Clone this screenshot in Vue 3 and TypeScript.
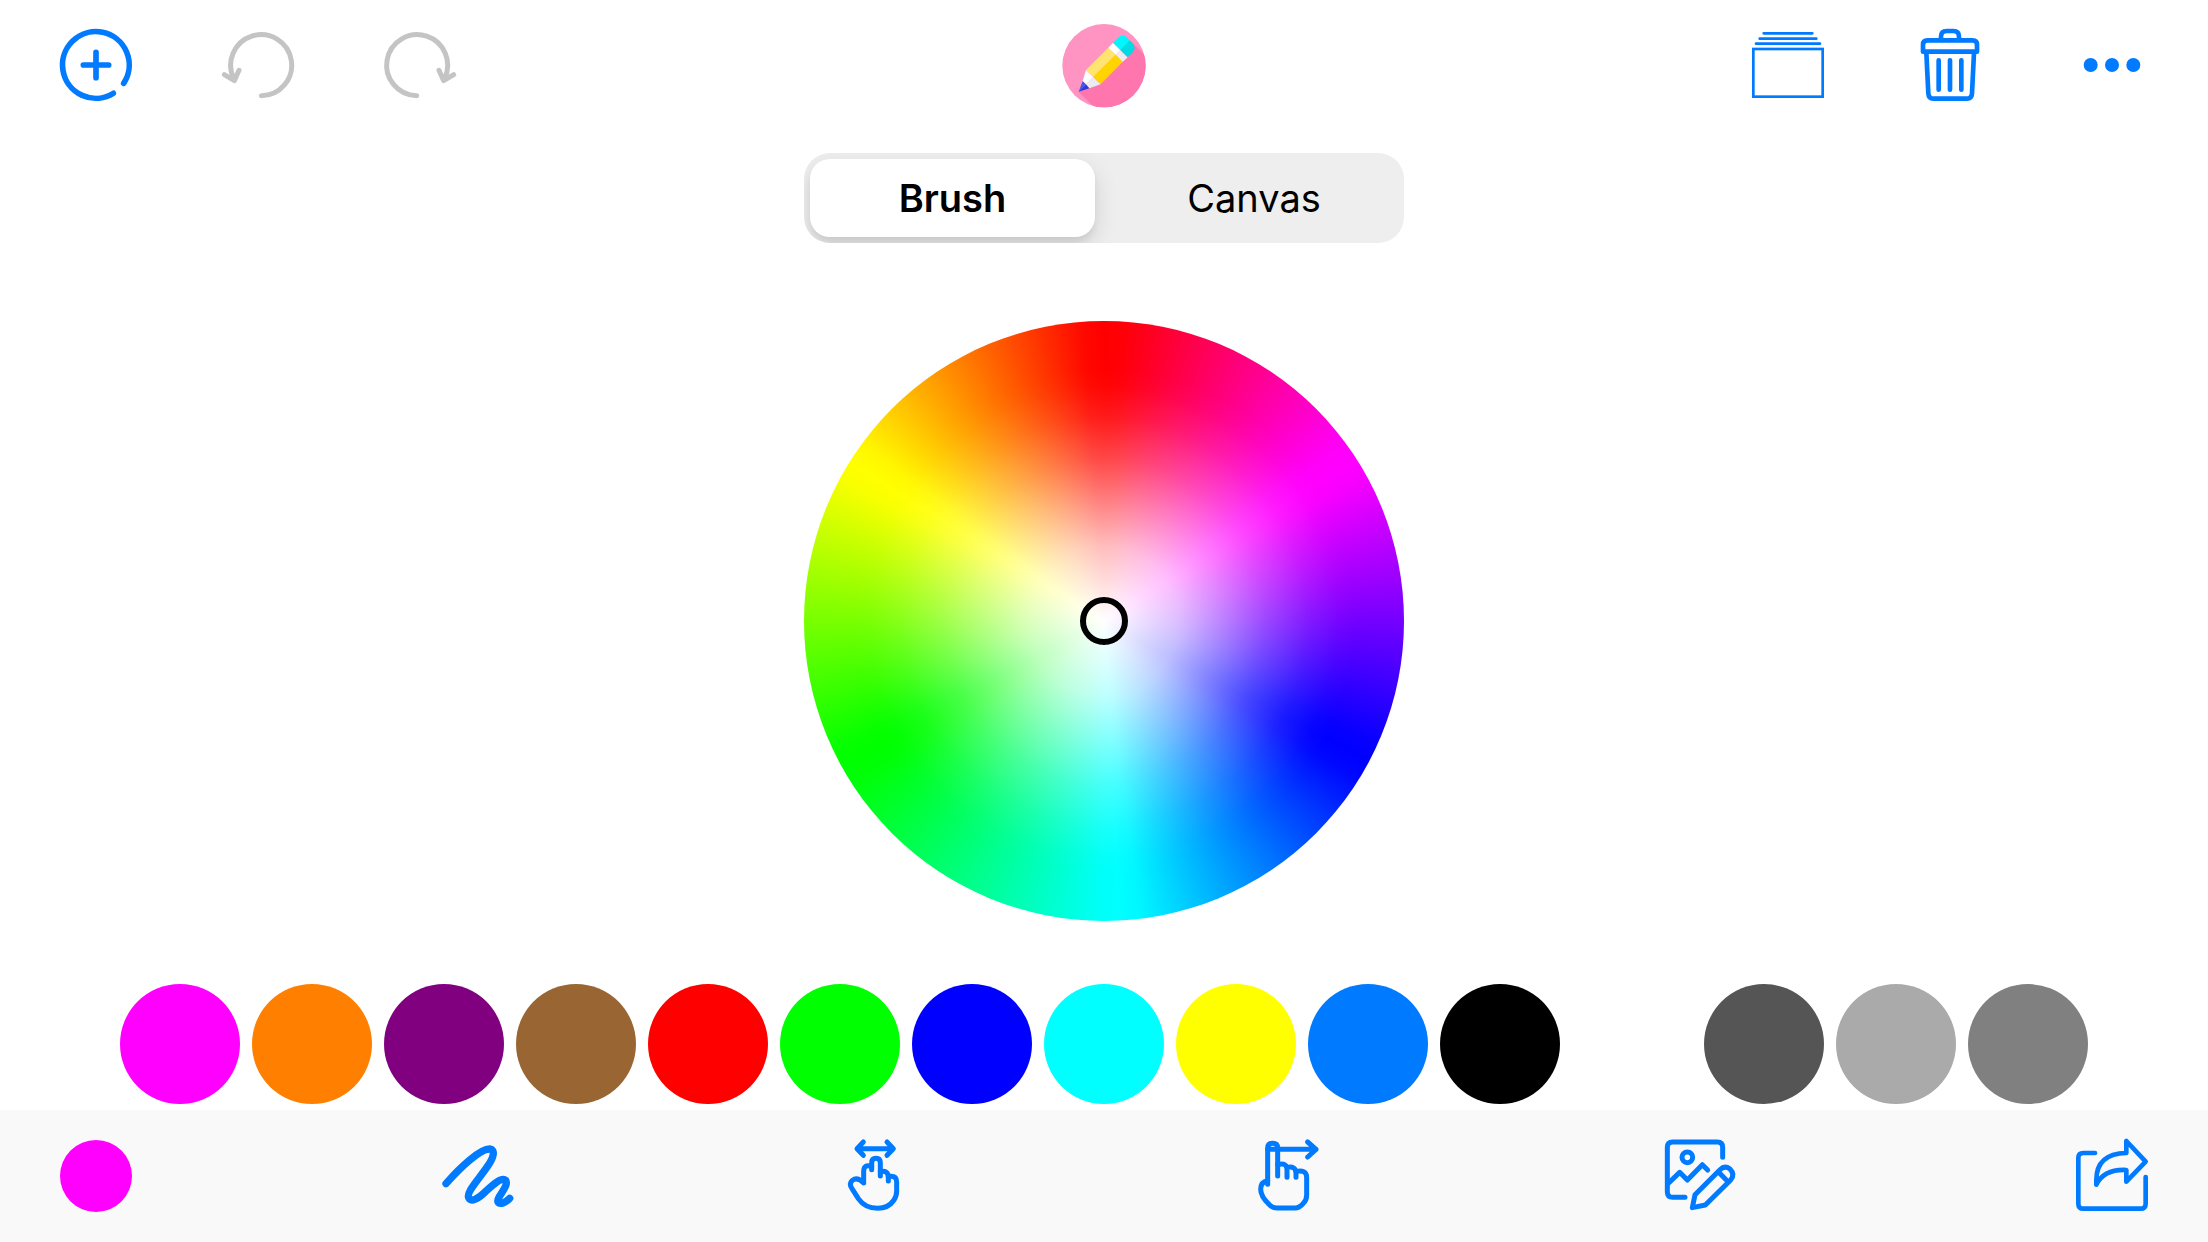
<script setup lang="ts">
import { ref } from 'vue'

type Target = 'Brush' | 'Canvas'

interface Swatch {
  name: string
  value: string
}

const targets: Target[] = ['Brush', 'Canvas']
const target = ref<Target>('Brush')
const brushColor = ref('#ff00ff')

const swatches: Swatch[] = [
  { name: 'Magenta', value: '#ff00ff' },
  { name: 'Orange', value: '#ff8000' },
  { name: 'Purple', value: '#800080' },
  { name: 'Brown', value: '#996633' },
  { name: 'Red', value: '#ff0000' },
  { name: 'Green', value: '#00ff00' },
  { name: 'Blue', value: '#0000ff' },
  { name: 'Cyan', value: '#00ffff' },
  { name: 'Yellow', value: '#ffff00' },
  { name: 'Azure', value: '#007aff' },
  { name: 'Black', value: '#000000' },
  { name: 'White', value: '#ffffff' },
  { name: 'Dark gray', value: '#555555' },
  { name: 'Light gray', value: '#aaaaaa' },
  { name: 'Gray', value: '#808080' },
]
</script>

<template>
  <div class="app">
    <header class="topbar">
      <div class="group">
        <button class="tool" type="button" aria-label="New drawing">
          <svg viewBox="60 57 216 216" stroke-width="17">
            <path d="M251 220A100 100 0 1 0 220 250M168 127V203M130 165H206" />
          </svg>
        </button>
        <button class="tool muted" type="button" aria-label="Undo">
          <svg viewBox="546 57 216 216" stroke-width="15">
            <path d="M664 257A91.500 91.500 0 1 0 582 207M553 194L583 212L597 181" />
          </svg>
        </button>
        <button class="tool muted" type="button" aria-label="Redo">
          <svg viewBox="1032 57 216 216" stroke-width="15">
            <path d="M1130 257A91.500 91.500 0 1 1 1213 207M1241 194L1211 212L1197 181" />
          </svg>
        </button>
      </div>

      <button class="tool logo" type="button" aria-label="Drawing tool">
        <svg viewBox="66 40 252 252" stroke="none">
          <clipPath id="disc"><circle cx="192" cy="168" r="125" /></clipPath>
          <g clip-path="url(#disc)">
            <rect x="60" y="36" width="264" height="264" fill="#ff93c1" />
            <path d="M116 246L168 298H330V152L277 99Z" fill="#ff75ad" />
          </g>
          <path d="M128 214L138 181L160 202L132 230Z" fill="#fff" />
          <path d="M160 202L182 224L148 236L132 230Z" fill="#ececf0" />
          <path d="M116 246L128 214L138 224Z" fill="#4557e4" />
          <path d="M116 246L138 224L148 236Z" fill="#2b3bd0" />
          <path d="M138 181L205 114L227 135L160 202Z" fill="#ffe570" />
          <path d="M160 202L227 135L248 157L182 224Z" fill="#ffd400" />
          <path d="M205 114L219 99L241 121L227 135Z" fill="#fff" />
          <path d="M227 135L241 121L263 143L248 157Z" fill="#ececf0" />
          <path d="M219 99L232 86Q246 71 261 83L269 92L241 121Z" fill="#00f7ff" />
          <path d="M241 121L269 92L277 99Q291 114 277 129L263 143Z" fill="#00dbe3" />
        </svg>
      </button>

      <div class="group end">
        <button class="tool" type="button" aria-label="Layers">
          <svg viewBox="66 57 216 216" stroke-width="8">
            <path d="M101 70H247M89 86H259M78 101H270" />
            <rect x="70" y="117" width="208" height="143" stroke-linejoin="miter" />
          </svg>
        </button>
        <button class="tool" type="button" aria-label="Delete">
          <svg viewBox="552 57 216 216" stroke-width="14">
            <path d="M579 125V104Q579 91 592 91H728Q741 91 741 104V125Z" />
            <path d="M633 88V80Q633 63 650 63H670Q687 63 687 80V88" />
            <path d="M589 128L595 250Q596 266 610 266H711Q725 266 726 250L732 128" />
            <path d="M626 151V239M660 151V239M694 151V239" />
          </svg>
        </button>
        <button class="tool" type="button" aria-label="More">
          <svg viewBox="1038 57 216 216" stroke="none" class="solid">
            <circle cx="1082" cy="165" r="21" />
            <circle cx="1146" cy="165" r="21" />
            <circle cx="1210" cy="165" r="21" />
          </svg>
        </button>
      </div>
    </header>

    <main class="picker">
      <div class="segments" role="group" aria-label="Color target">
        <button
          v-for="item in targets"
          :key="item"
          type="button"
          class="segment"
          :class="{ active: item === target }"
          :aria-pressed="item === target"
          @click="target = item"
        >
          {{ item }}
        </button>
      </div>

      <div class="wheel">
        <button class="handle" type="button" aria-label="Selected color"></button>
      </div>
    </main>

    <div class="swatches">
      <button
        v-for="swatch in swatches"
        :key="swatch.name"
        type="button"
        class="swatch"
        :aria-label="swatch.name"
        :style="{ backgroundColor: swatch.value }"
        @click="brushColor = swatch.value"
      ></button>
    </div>

    <footer class="bottombar">
      <button
        class="tool current"
        type="button"
        aria-label="Brush color"
        :style="{ backgroundColor: brushColor }"
      ></button>
      <button class="tool" type="button" aria-label="Stroke">
        <svg viewBox="36 60 216 216" stroke-width="22">
          <path d="M48 191C92 140 152 86 179 87C197 89 191 112 174 137C148 176 108 216 116 233C123 247 143 237 162 219C190 193 215 171 227 181C235 193 217 214 208 230C198 247 206 253 219 249C228 246 233 241 239 235" />
        </svg>
      </button>
      <button class="tool" type="button" aria-label="Pan and zoom">
        <svg viewBox="51 60 216 216" stroke-width="15">
          <path d="M112 86H219M130 66L111 86L130 106M201 66L220 86L201 106" />
          <path d="M155 149V129Q155 115 168 115Q181 115 181 129V168" />
          <path d="M155 140Q131 131 131 155V189Q112 169 97 181Q86 191 96 206L115 236Q135 265 173 265Q205 265 222 240Q230 228 230 212V186Q230 169 213 169H205" />
          <path d="M181 155Q205 150 205 173V183" />
        </svg>
      </button>
      <button class="tool" type="button" aria-label="Straight line">
        <svg viewBox="36 60 216 216" stroke-width="15">
          <path d="M83 88H228M203 66L228 88L203 111" />
          <path d="M83 193V84Q83 70 98 70Q113 70 113 84V168" />
          <path d="M113 134Q141 126 141 150V172M141 142Q168 137 168 160V172" />
          <path d="M168 154Q200 148 200 172V225Q200 240 190 250Q178 264 165 264H110Q98 264 88 254Q62 230 62 208Q62 185 83 182" />
        </svg>
      </button>
      <button class="tool" type="button" aria-label="Edit picture">
        <svg viewBox="69 60 216 216" stroke-width="15">
          <path d="M248 112V82Q248 66 232 66H98Q82 66 82 82V216Q82 232 98 232H135" />
          <circle cx="142" cy="112" r="16" />
          <path d="M86 189L119 157L142 180L187 134L203 150" />
          <path d="M157 263L165 224L240 149Q254 135 270 147Q286 163 272 180L196 255ZM236 157L262 183" />
        </svg>
      </button>
      <button class="tool" type="button" aria-label="Share">
        <svg viewBox="78 60 216 216" stroke-width="14">
          <path d="M135 99H100Q85 99 85 114V251Q85 266 100 266H272Q287 266 287 251V171" />
          <path d="M229 63V99Q139 101 139 180V194Q162 147 229 150V185L287 125Z" />
        </svg>
      </button>
    </footer>
  </div>
</template>

<style>
body {
  margin: 0;
  background: #fff;
}
</style>

<style scoped>
.app {
  display: flex;
  flex-direction: column;
  min-height: 100vh;
  background: #fff;
  font-family: Inter, "Liberation Sans", sans-serif;
}

button {
  margin: 0;
  padding: 0;
  border: 0;
  background: none;
  font: inherit;
  cursor: pointer;
}

.topbar {
  display: grid;
  grid-template-columns: 1fr auto 1fr;
  align-items: center;
  height: 130px;
  padding: 0 60px;
}

.group {
  display: flex;
  gap: 90px;
}

.end {
  justify-content: flex-end;
}

.tool {
  width: 72px;
  height: 72px;
  color: #007aff;
}

.tool svg {
  display: block;
  width: 100%;
  height: 100%;
  overflow: visible;
  fill: none;
  stroke-linecap: round;
  stroke-linejoin: round;
}

.tool svg:not([stroke]) {
  stroke: currentColor;
}

.tool .solid {
  fill: currentColor;
}

.muted {
  color: #c4c4c4;
}

.logo {
  width: 84px;
  height: 84px;
}

.picker {
  display: flex;
  flex-direction: column;
  align-items: center;
  gap: 78px;
  padding: 23px 60px 63px;
}

.segments {
  display: grid;
  grid-template-columns: 1fr 1fr;
  width: 600px;
  height: 90px;
  border-radius: 26px;
  background: #eee;
  overflow: hidden;
}

.segment {
  margin: 6px 9px 6px 6px;
  border-radius: 20px;
  color: #000;
  font-size: 38px;
  line-height: 46px;
}

.segment:last-child {
  margin: 6px;
}

.segment.active {
  background: #fff;
  box-shadow: 0 9px 24px rgba(0, 0, 0, 0.12), 0 6px 6px rgba(0, 0, 0, 0.06);
  font-weight: 600;
}

.wheel {
  display: grid;
  place-items: center;
  width: 600px;
  height: 600px;
  border-radius: 50%;
  background:
    radial-gradient(
      closest-side,
      rgba(255, 255, 255, 1) 0%,
      rgba(255, 255, 255, 0.74) 25%,
      rgba(255, 255, 255, 0.5) 40%,
      rgba(255, 255, 255, 0.28) 54%,
      rgba(255, 255, 255, 0.1) 68%,
      rgba(255, 255, 255, 0.02) 78%,
      rgba(255, 255, 255, 0) 84%
    ),
    conic-gradient(
      #f00 0deg,
      #ff0008 4deg,
      #ff00f7 53deg,
      #f0f 57deg,
      #f700ff 61deg,
      #0800ff 114deg,
      #00f 118deg,
      #0008ff 122deg,
      #00f7ff 173deg,
      #0ff 177deg,
      #00fff7 181deg,
      #00ff08 237deg,
      #0f0 241deg,
      #08ff00 245deg,
      #f7ff00 298deg,
      #ff0 302deg,
      #fff700 306deg,
      #ff0800 356deg,
      #f00 360deg
    );
}

.handle {
  box-sizing: border-box;
  width: 48px;
  height: 48px;
  border: 6px solid #000;
  border-radius: 50%;
}

.swatches {
  display: flex;
  justify-content: space-between;
  margin-top: auto;
  padding: 0 120px 6px;
}

.swatch {
  width: 120px;
  height: 120px;
  border-radius: 50%;
}

.bottombar {
  display: grid;
  grid-template-columns: 382fr 395fr 415fr 411fr 413fr 72px;
  align-items: center;
  height: 132px;
  padding: 0 60px;
  background: #f9f9f9;
}

.current {
  border-radius: 50%;
}
</style>
